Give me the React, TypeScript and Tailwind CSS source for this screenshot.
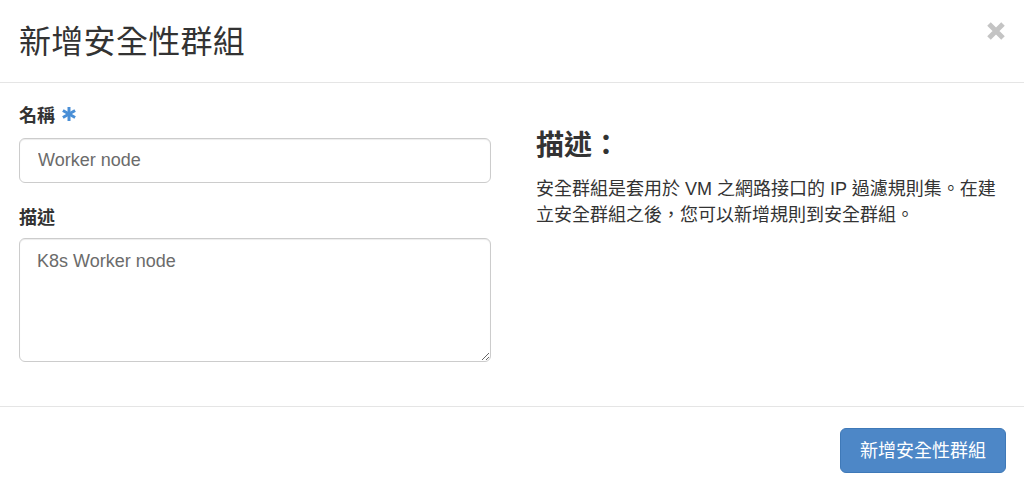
const font = {
  fontFamily: '"Liberation Sans", "Noto Sans CJK TC", sans-serif',
};

const CloseIcon = () => (
  <svg width="22" height="20" viewBox="0 0 22 20" aria-hidden="true">
    <path d="M4 3 L18 17 M18 3 L4 17" stroke="#c4c4c4" strokeWidth="5" strokeLinecap="butt" />
  </svg>
);

const Asterisk = () => (
  <svg width="14" height="14" viewBox="0 0 14 14" className="ml-[7px] mt-[-6px]" aria-hidden="true">
    <g stroke="#4a8fd6" strokeWidth="3" strokeLinecap="butt">
      <path d="M7 0 V14" />
      <path d="M0.9 3.5 L13.1 10.5" />
      <path d="M13.1 3.5 L0.9 10.5" />
    </g>
  </svg>
);

const App = () => {
  return (
    <div className="w-[1024px] h-[489px] bg-white text-[#333] flex flex-col" style={font}>
      {/* header */}
      <div className="h-[83px] px-[19px] flex items-center justify-between border-b border-[#e5e5e5]">
        <h4 className="text-[32px] leading-none font-normal tracking-[0.3px] pt-[2px]">新增安全性群組</h4>
        <button className="mr-[-2px] mt-[-20px]">
          <CloseIcon />
        </button>
      </div>

      {/* body */}
      <div className="h-[324px] px-[19px] pt-[21px] grid grid-cols-[472px_1fr] gap-x-[45px] border-b border-[#e5e5e5]">
        <div>
          <div className="mb-[9px] flex items-center h-[25px]">
            <label className="text-[18px] leading-[25px] font-semibold">名稱</label>
            <Asterisk />
          </div>
          <input
            className="w-full h-[45px] px-[18px] rounded-[6px] border border-[#cccccc] text-[18px] text-[#6b6b6b] shadow-[inset_0_1px_1px_rgba(0,0,0,0.075)] outline-none"
            style={font}
            defaultValue="Worker node"
          />
          <div className="mt-[23px] mb-[7px] h-[25px]">
            <label className="text-[18px] leading-[25px] font-semibold">描述</label>
          </div>
          <div className="h-[124px] pl-[17px] pt-[10px] rounded-[6px] border border-[#cccccc] shadow-[inset_0_1px_1px_rgba(0,0,0,0.075)] overflow-hidden">
            <textarea
              className="block w-full h-full bg-transparent text-[18px] leading-[25px] text-[#6b6b6b] outline-none resize-y"
              style={font}
              defaultValue="K8s Worker node"
            />
          </div>
        </div>
        <div className="pt-[24px]">
          <h3 className="text-[28px] leading-[36px] font-semibold">描述：</h3>
          <p className="mt-[12px] text-[18px] leading-[26px]">
            安全群組是套用於 VM 之網路接口的 IP 過濾規則集。在建立安全群組之後，您可以新增規則到安全群組。
          </p>
        </div>
      </div>

      {/* footer */}
      <div className="flex-1 px-[18px] pt-[21px] flex justify-end items-start">
        <button className="h-[45px] px-[19px] rounded-[6px] bg-[#4d87c7] border border-[#3f79b8] text-white text-[18px] leading-none">
          新增安全性群組
        </button>
      </div>
    </div>
  );
};

export default App;
